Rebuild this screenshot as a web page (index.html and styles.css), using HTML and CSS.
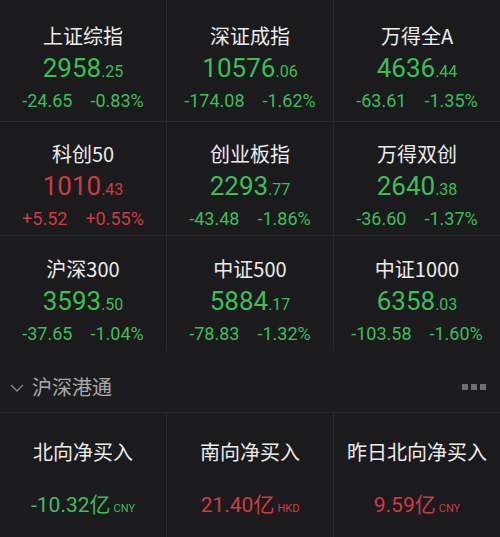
FILE: index.html
```html
<!DOCTYPE html>
<html lang="zh-CN">
<head>
    <meta charset="UTF-8">
    <meta name="viewport" content="width=device-width, initial-scale=1.0">
    <title>行情</title>
    <link rel="stylesheet" href="styles.css">
</head>
<body>
    <div class="indices">
        <div class="cell">
            <div class="name">上证综指</div>
            <div class="price down">2958<small>.25</small></div>
            <div class="chg down"><span>-24.65</span><span>-0.83%</span></div>
        </div>
        <div class="cell">
            <div class="name">深证成指</div>
            <div class="price down">10576<small>.06</small></div>
            <div class="chg down"><span>-174.08</span><span>-1.62%</span></div>
        </div>
        <div class="cell">
            <div class="name">万得全A</div>
            <div class="price down">4636<small>.44</small></div>
            <div class="chg down"><span>-63.61</span><span>-1.35%</span></div>
        </div>

        <div class="cell">
            <div class="name">科创50</div>
            <div class="price up">1010<small>.43</small></div>
            <div class="chg up"><span>+5.52</span><span>+0.55%</span></div>
        </div>
        <div class="cell">
            <div class="name">创业板指</div>
            <div class="price down">2293<small>.77</small></div>
            <div class="chg down"><span>-43.48</span><span>-1.86%</span></div>
        </div>
        <div class="cell">
            <div class="name">万得双创</div>
            <div class="price down">2640<small>.38</small></div>
            <div class="chg down"><span>-36.60</span><span>-1.37%</span></div>
        </div>

        <div class="cell">
            <div class="name">沪深300</div>
            <div class="price down">3593<small>.50</small></div>
            <div class="chg down"><span>-37.65</span><span>-1.04%</span></div>
        </div>
        <div class="cell">
            <div class="name">中证500</div>
            <div class="price down">5884<small>.17</small></div>
            <div class="chg down"><span>-78.83</span><span>-1.32%</span></div>
        </div>
        <div class="cell">
            <div class="name">中证1000</div>
            <div class="price down">6358<small>.03</small></div>
            <div class="chg down"><span>-103.58</span><span>-1.60%</span></div>
        </div>
    </div>

    <div class="section-head">
        <svg class="chevron" width="14" height="8" viewBox="0 0 14 8">
            <path d="M1 1 L7 7 L13 1" fill="none" stroke="#8a8a8c" stroke-width="1.3"/>
        </svg>
        <span class="section-title">沪深港通</span>
        <div class="more"><i></i><i></i><i></i></div>
    </div>

    <div class="flows">
        <div class="flow">
            <div class="flow-name">北向净买入</div>
            <div class="flow-val down">-10.32亿<small>CNY</small></div>
        </div>
        <div class="flow">
            <div class="flow-name">南向净买入</div>
            <div class="flow-val up">21.40亿<small>HKD</small></div>
        </div>
        <div class="flow">
            <div class="flow-name">昨日北向净买入</div>
            <div class="flow-val up">9.59亿<small>CNY</small></div>
        </div>
    </div>
</body>
</html>
```

FILE: styles.css
```css
body { margin: 0; background-color: #1b1b1d; color: #ececec; font-family: "Noto Sans CJK SC", "Noto Sans", sans-serif; overflow: hidden; }
.up { color: #cf3a42; }
.down { color: #3abf57; }

.indices { display: grid; grid-template-columns: 167px 167px 1fr; grid-template-rows: 122px 114px 115px; }
.cell { display: flex; flex-direction: column; align-items: center; justify-content: center; padding-top: 14px; border-right: 1px solid #2a2a2d; border-bottom: 1px solid #2a2a2d; }
.cell:nth-child(3n) { border-right: none; }
.cell:nth-child(n+7) { border-bottom: none; }
.name { font-size: 20px; line-height: 26px; }
.price { font-family: Roboto, "Noto Sans", sans-serif; font-size: 26px; line-height: 30px; margin-top: 4px; }
.price small { font-size: 16px; }
.chg { display: flex; gap: 18px; font-family: Roboto, "Noto Sans", sans-serif; font-size: 18px; line-height: 24px; margin-top: 2px; }

.section-head { display: flex; align-items: center; height: 62px; padding: 10px 14px 0 10px; box-sizing: border-box; background-color: #1c1c1e; border-bottom: 1px solid #2a2a2d; }
.chevron { margin-right: 8px; margin-top: 2px; }
.section-title { font-size: 20px; color: #a9a9ab; }
.more { margin-left: auto; display: flex; gap: 3px; }
.more i { width: 6px; height: 6px; background-color: #6f6f72; }

.flows { display: grid; grid-template-columns: 167px 167px 1fr; height: 124px; }
.flow { display: flex; flex-direction: column; align-items: center; padding-top: 26px; border-right: 1px solid #2a2a2d; }
.flow:last-child { border-right: none; }
.flow-name { font-size: 20px; line-height: 26px; }
.flow-val { margin-top: 27px; font-size: 21px; line-height: 26px; font-family: Roboto, "Noto Sans CJK SC", sans-serif; }
.flow-val small { font-size: 11px; margin-left: 3px; }
```
